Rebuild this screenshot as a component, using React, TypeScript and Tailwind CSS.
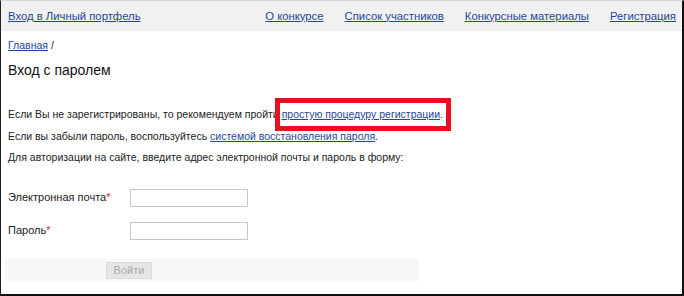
import React from "react";

export default function App() {
  const link = "text-[#24479a] underline";
  return (
    <div
      className="w-[684px] h-[296px] bg-white overflow-hidden border-l border-r-2 border-b-2 border-t border-l-[#222] border-r-[#111] border-b-[#111] border-t-[#cfd8cc] flex flex-col"
      style={{ fontFamily: '"Liberation Sans", Arial, sans-serif' }}
    >
      <div className="h-[30px] shrink-0 bg-[#f1f1f1] flex items-center pl-[7px] pr-[6px] text-[11.3px] text-[#24479a] whitespace-nowrap">
        <a className="underline">Вход в Личный портфель</a>
        <div className="ml-auto flex gap-[21px]">
          <a className="underline">О конкурсе</a>
          <a className="underline">Список участников</a>
          <a className="underline">Конкурсные материалы</a>
          <a className="underline">Регистрация</a>
        </div>
      </div>
      <div className="pl-[7px] mt-[7px] text-[10.5px] leading-[14px] text-[#222]">
        <a className={link}>Главная</a> /
      </div>
      <h1 className="pl-[7px] mt-[9px] text-[14px] leading-[18px] text-[#111]">Вход с паролем</h1>
      <div className="pl-[7px] mt-[25px] text-[10.5px] text-[#222] leading-[21.5px] whitespace-nowrap">
        <p>
          Если Вы не зарегистрированы, то рекомендуем пройти{" "}
          <span className="relative">
            <a className={link}>простую процедуру регистрации</a>
            <span className="absolute left-[-7px] right-[-11px] top-[-10px] bottom-[-11px] border-[5px] border-[#e8101e]" />
          </span>
          .
        </p>
        <p>
          Если вы забыли пароль, воспользуйтесь <a className={link}>системой восстановления пароля</a>.
        </p>
        <p>Для авторизации на сайте, введите адрес электронной почты и пароль в форму:</p>
      </div>
      <div className="pl-[7px] mt-[20px] text-[11px] text-[#222] flex flex-col gap-[15px]">
        <div className="flex items-center">
          <span className="w-[122px]">
            Электронная почта<span className="text-[#d23]">*</span>
          </span>
          <div className="w-[118px] h-[18px] border border-[#c8c8c8] bg-white" />
        </div>
        <div className="flex items-center">
          <span className="w-[122px]">
            Пароль<span className="text-[#d23]">*</span>
          </span>
          <div className="w-[118px] h-[18px] border border-[#c8c8c8] bg-white" />
        </div>
      </div>
      <div className="ml-[4px] mt-[19px] w-[414px] h-[23px] bg-[#f7f7f7] rounded-[3px] flex items-center pl-[101px]">
        <div className="w-[46px] h-[17px] bg-[#e6e6e6] border border-[#dadada] text-[11px] text-[#aaa] flex items-center justify-center">
          Войти
        </div>
      </div>
    </div>
  );
}
